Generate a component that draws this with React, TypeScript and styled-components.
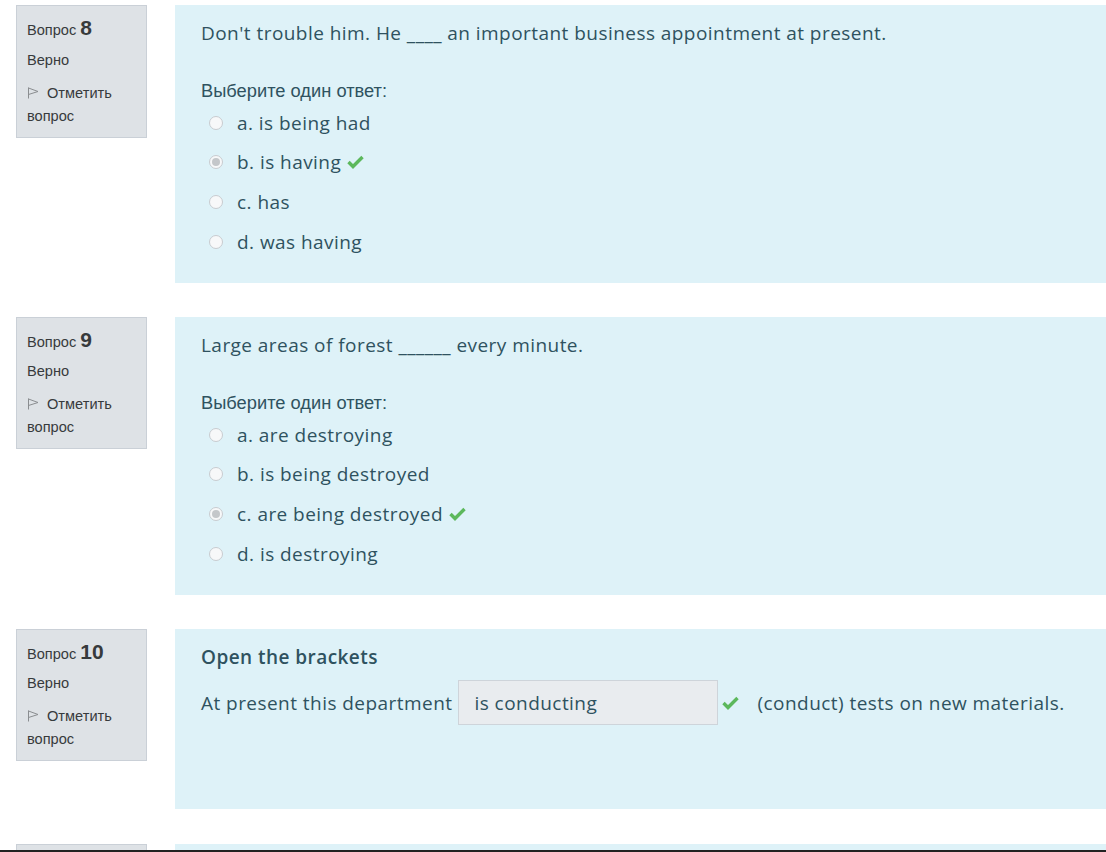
import React from "react";
import styled, { createGlobalStyle } from "styled-components";

const Global = createGlobalStyle`
  html, body { margin: 0; padding: 0; background: #fff; overflow: hidden; }
  body { font-family: "Liberation Sans", Arial, sans-serif; }
`;

const Page = styled.div`
  padding: 5px 0 0 16px;
  display: flex;
  flex-direction: column;
  gap: 34.3px;
`;

const Question = styled.div`
  display: flex;
  align-items: flex-start;
  gap: 28px;
`;

const Info = styled.div`
  flex: 0 0 131px;
  box-sizing: border-box;
  background: #dee2e6;
  border: 1px solid #cad0d7;
  padding: 10px 10px 9px;
  color: #373a3c;
  font-family: "Liberation Sans", Arial, sans-serif;
  font-size: 14.6px;
`;

const QNo = styled.div`
  height: 26px;
  display: flex;
  align-items: baseline;
  gap: 4px;
  line-height: 1;
`;

const Label = styled.span`
  line-height: 1;
`;

const Num = styled.span`
  font-size: 21px;
  font-weight: bold;
  line-height: 1;
  padding-top: 1px;
`;

const State = styled.div`
  line-height: 21px;
  margin-top: 7.5px;
`;

const Flag = styled.div`
  line-height: 23px;
  margin-top: 11px;
  svg { margin-right: 8px; vertical-align: -1px; }
`;

const Content = styled.div<{ $bottom: number }>`
  flex: 1;
  background: #def2f8;
  padding: 15px 26px ${(p) => p.$bottom}px 26px;
  color: #2f5260;
  font-family: "Open Sans", sans-serif;
  font-size: 19px;
  letter-spacing: 0.45px;
`;

const QText = styled.div`
  line-height: 27px;
`;

const Title = styled.div`
  line-height: 27px;
  font-weight: 600;
`;

const Prompt = styled.div`
  font-family: "Liberation Sans", Arial, sans-serif;
  font-size: 18.3px;
  letter-spacing: 0;
  line-height: 24px;
  margin-top: 32px;
`;

const Options = styled.div`
  padding-left: 8px;
`;

const Option = styled.div`
  height: 39.67px;
  display: flex;
  align-items: center;
`;

const Radio = styled.span<{ $checked?: boolean }>`
  box-sizing: border-box;
  width: 14px;
  height: 14px;
  border-radius: 50%;
  border: 1px solid #c8ccd0;
  background: #f7f8f9;
  margin-right: 14px;
  display: flex;
  align-items: center;
  justify-content: center;
  &::after {
    content: "";
    display: ${(p) => (p.$checked ? "block" : "none")};
    width: 8px;
    height: 8px;
    border-radius: 50%;
    background: #c4c7ca;
  }
`;

const Check = styled.svg<{ $ml: number }>`
  margin-left: ${(p) => p.$ml}px;
  flex: none;
`;

const FillRow = styled.div`
  margin-top: 9.5px;
  display: flex;
  align-items: center;
`;

const Input = styled.div`
  box-sizing: border-box;
  width: 260px;
  height: 45px;
  margin-left: 6px;
  background: #e9ecef;
  border: 1px solid #ced4da;
  padding-left: 15px;
  display: flex;
  align-items: center;
`;

const After = styled.span`
  margin-left: 18px;
`;

const BottomBar = styled.div`
  position: fixed;
  left: 0;
  right: 0;
  bottom: 0;
  height: 2px;
  background: #222;
`;

const CheckIcon = ({ ml = 6 }: { ml?: number }) => (
  <Check $ml={ml} width="17" height="14" viewBox="0 0 17 14">
    <path d="M1.5 7 L6 11.5 L15.5 2" fill="none" stroke="#5cb85c" strokeWidth="3.4" strokeLinejoin="miter" />
  </Check>
);

const FlagIcon = () => (
  <svg width="12" height="12" viewBox="0 0 12 12">
    <path d="M1.5 0.5 V11.5 M1.5 1 L11 4.5 L1.5 7.5" fill="none" stroke="#8a8d90" strokeWidth="1" />
  </svg>
);

const InfoBox = ({ n }: { n: number }) => (
  <Info>
    <QNo>
      <Label>Вопрос</Label>
      <Num>{n}</Num>
    </QNo>
    <State>Верно</State>
    <Flag>
      <FlagIcon />
      Отметить вопрос
    </Flag>
  </Info>
);

type Opt = { text: string; checked?: boolean };

const MultiChoice = ({ n, text, opts }: { n: number; text: string; opts: Opt[] }) => (
  <Question>
    <InfoBox n={n} />
    <Content $bottom={21}>
      <QText>{text}</QText>
      <Prompt>Выберите один ответ:</Prompt>
      <Options>
        {opts.map((o) => (
          <Option key={o.text}>
            <Radio $checked={o.checked} />
            {o.text}
            {o.checked && <CheckIcon />}
          </Option>
        ))}
      </Options>
    </Content>
  </Question>
);

export default function App() {
  return (
    <>
      <Global />
      <Page>
        <MultiChoice
          n={8}
          text="Don't trouble him. He ____ an important business appointment at present."
          opts={[
            { text: "a. is being had" },
            { text: "b. is having", checked: true },
            { text: "c. has" },
            { text: "d. was having" },
          ]}
        />
        <MultiChoice
          n={9}
          text="Large areas of forest ______ every minute."
          opts={[
            { text: "a. are destroying" },
            { text: "b. is being destroyed" },
            { text: "c. are being destroyed", checked: true },
            { text: "d. is destroying" },
          ]}
        />
        <Question>
          <InfoBox n={10} />
          <Content $bottom={84}>
            <Title>Open the brackets</Title>
            <FillRow>
              At present this department
              <Input>is conducting</Input>
              <CheckIcon ml={4} />
              <After>(conduct) tests on new materials.</After>
            </FillRow>
          </Content>
        </Question>
        <Question>
          <InfoBox n={11} />
          <Content $bottom={21}>
            <QText>&nbsp;</QText>
          </Content>
        </Question>
      </Page>
      <BottomBar />
    </>
  );
}
